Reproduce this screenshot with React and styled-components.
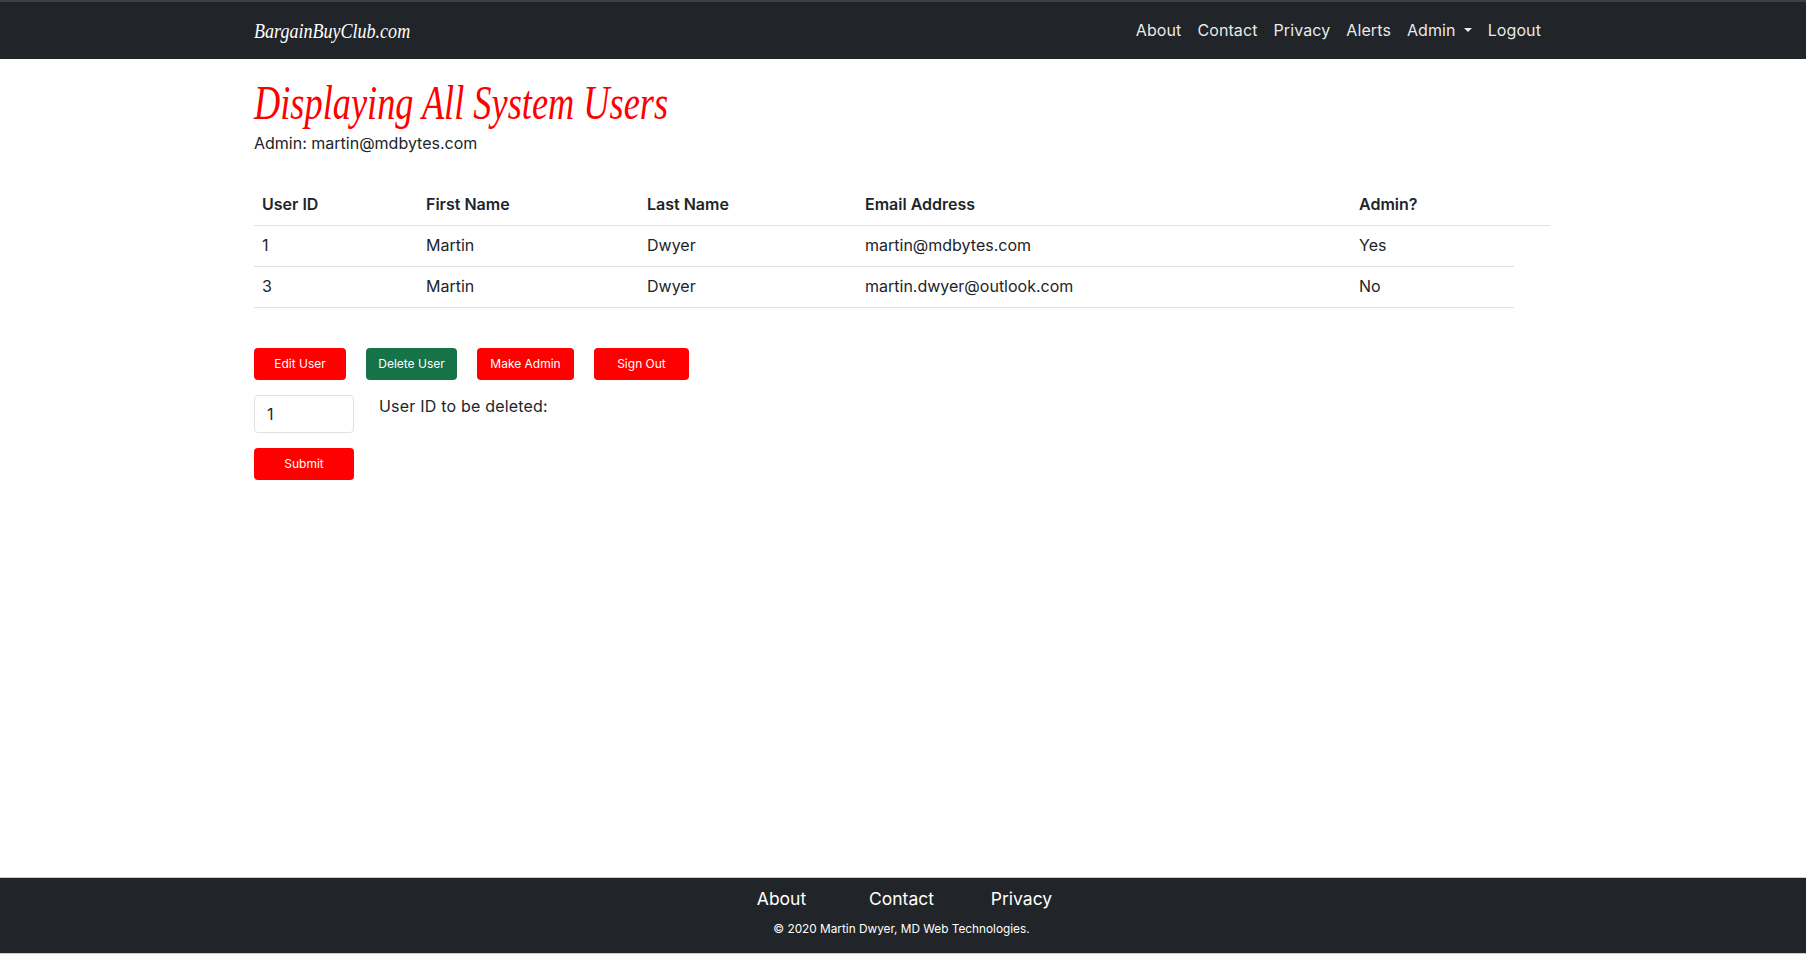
import styled, { createGlobalStyle } from 'styled-components';

const GlobalStyle = createGlobalStyle`
  html, body {
    margin: 0;
    padding: 0;
    background: #fff;
  }
  body {
    font-family: 'Inter', 'Noto Sans', sans-serif;
    font-size: 16px;
    color: #212529;
  }
`;

const COLUMNS = [164, 221, 218, 494, 163, 36];
const HEADINGS = ['User ID', 'First Name', 'Last Name', 'Email Address', 'Admin?', ''];
const USERS = [
  { id: 1, first: 'Martin', last: 'Dwyer', email: 'martin@mdbytes.com', admin: 'Yes' },
  { id: 3, first: 'Martin', last: 'Dwyer', email: 'martin.dwyer@outlook.com', admin: 'No' },
];
const ACTIONS = [
  { label: 'Edit User', width: 92 },
  { label: 'Delete User', width: 91, active: true },
  { label: 'Make Admin', width: 97 },
  { label: 'Sign Out', width: 95 },
];

const App = () => {
  return (
    <Page>
      <GlobalStyle />
      <NavBar>
        <Brand>BargainBuyClub.com</Brand>
        <NavLinks>
          <NavLink>About</NavLink>
          <NavLink>Contact</NavLink>
          <NavLink>Privacy</NavLink>
          <NavLink>Alerts</NavLink>
          <NavLink>
            Admin
            <Caret />
          </NavLink>
          <NavLink>Logout</NavLink>
        </NavLinks>
      </NavBar>
      <Main>
        <Title>Displaying All System Users</Title>
        <AdminLine>Admin: martin@mdbytes.com</AdminLine>
        <UserTable>
          <colgroup>
            {COLUMNS.map((width, i) => (
              <col key={i} style={{ width }} />
            ))}
          </colgroup>
          <thead>
            <tr>
              {HEADINGS.map((heading, i) => (
                <HeadCell key={i}>{heading}</HeadCell>
              ))}
            </tr>
          </thead>
          <tbody>
            {USERS.map((user) => (
              <tr key={user.id}>
                <BodyCell>{user.id}</BodyCell>
                <BodyCell>{user.first}</BodyCell>
                <BodyCell>{user.last}</BodyCell>
                <BodyCell>{user.email}</BodyCell>
                <BodyCell>{user.admin}</BodyCell>
              </tr>
            ))}
          </tbody>
        </UserTable>
        <ActionRow>
          {ACTIONS.map(({ label, width, active }) => (
            <ActionButton key={label} $width={width} $active={active}>
              {label}
            </ActionButton>
          ))}
        </ActionRow>
        <FormRow>
          <FormColumn>
            <IdInput defaultValue="1" />
            <ActionButton $width={100}>Submit</ActionButton>
          </FormColumn>
          <FormLabel>User ID to be deleted:</FormLabel>
        </FormRow>
      </Main>
      <Footer>
        <FooterLinks>
          <FooterLink>About</FooterLink>
          <FooterLink>Contact</FooterLink>
          <FooterLink>Privacy</FooterLink>
        </FooterLinks>
        <Copyright>© 2020 Martin Dwyer, MD Web Technologies.</Copyright>
      </Footer>
    </Page>
  );
};

const Page = styled.div`
  height: 955px;
  display: flex;
  flex-direction: column;
`;

const NavBar = styled.nav`
  height: 57px;
  flex: none;
  display: flex;
  align-items: center;
  justify-content: space-between;
  padding: 0 265px 0 254px;
  background-color: #212529;
  border-top: 2px solid #3a404b;
`;

const Brand = styled.a`
  font-family: 'Liberation Serif', serif;
  font-style: italic;
  font-size: 22px;
  color: #fff;
  transform: scaleX(0.82);
  transform-origin: left center;
`;

const NavLinks = styled.div`
  display: flex;
  align-items: center;
  gap: 16px;
`;

const NavLink = styled.a`
  display: flex;
  align-items: center;
  font-size: 16px;
  line-height: 24px;
  letter-spacing: 0.1px;
  margin-top: -1px;
  color: rgba(255, 255, 255, 0.92);
`;

const Caret = styled.span`
  margin-left: 8px;
  border-top: 4.8px solid rgba(255, 255, 255, 0.92);
  border-left: 4.8px solid transparent;
  border-right: 4.8px solid transparent;
`;

const Main = styled.main`
  flex: 1;
  padding: 16px 0 0 254px;
`;

const Title = styled.h1`
  margin: 0;
  font-family: 'Liberation Serif', serif;
  font-style: italic;
  font-weight: 400;
  font-size: 48px;
  line-height: 56px;
  color: #ff0000;
  transform: scaleX(0.757);
  transform-origin: left center;
`;

const AdminLine = styled.p`
  margin: 0;
  font-size: 16px;
  line-height: 24px;
`;

const UserTable = styled.table`
  margin-top: 29px;
  width: 1296px;
  table-layout: fixed;
  border-collapse: collapse;
`;

const HeadCell = styled.th`
  height: 41px;
  padding: 0 8px;
  box-sizing: border-box;
  text-align: left;
  font-weight: 600;
  font-size: 16px;
  border-bottom: 1px solid #dee2e6;
`;

const BodyCell = styled.td`
  height: 41px;
  padding: 0 8px 2px;
  box-sizing: border-box;
  font-size: 16px;
  border-bottom: 1px solid #dee2e6;
`;

const ActionRow = styled.div`
  margin-top: 40px;
  display: flex;
  gap: 20px;
`;

const ActionButton = styled.button`
  width: ${({ $width }) => $width}px;
  height: 32px;
  padding: 0;
  border: none;
  border-radius: 4px;
  font-family: inherit;
  font-size: 12px;
  color: #fff;
  background-color: ${({ $active }) => ($active ? '#157347' : '#ff0000')};
`;

const FormRow = styled.div`
  margin-top: 15px;
  display: flex;
  gap: 25px;
`;

const FormColumn = styled.div`
  width: 100px;
  display: flex;
  flex-direction: column;
  gap: 15px;
`;

const IdInput = styled.input`
  width: 100px;
  height: 38px;
  box-sizing: border-box;
  padding: 6px 12px;
  border: 1px solid #dee2e6;
  border-radius: 4px;
  font-family: inherit;
  font-size: 16px;
  color: #212529;
`;

const FormLabel = styled.label`
  font-size: 16px;
  line-height: 22px;
  letter-spacing: 0.2px;
`;

const Footer = styled.footer`
  height: 77px;
  box-sizing: border-box;
  flex: none;
  margin-bottom: 1px;
  padding-right: 3px;
  display: flex;
  flex-direction: column;
  align-items: center;
  background-color: #212529;
  border-top: 1px solid #ccc;
  border-bottom: 1px solid #ccc;
`;

const FooterLinks = styled.div`
  margin-top: 7px;
  display: grid;
  grid-template-columns: repeat(3, 120px);
  justify-items: center;
`;

const FooterLink = styled.a`
  font-size: 17.5px;
  line-height: 27px;
  color: #fff;
`;

const Copyright = styled.p`
  margin: 8px 0 0;
  font-size: 11.8px;
  line-height: 18px;
  color: #fff;
`;

export default App;
